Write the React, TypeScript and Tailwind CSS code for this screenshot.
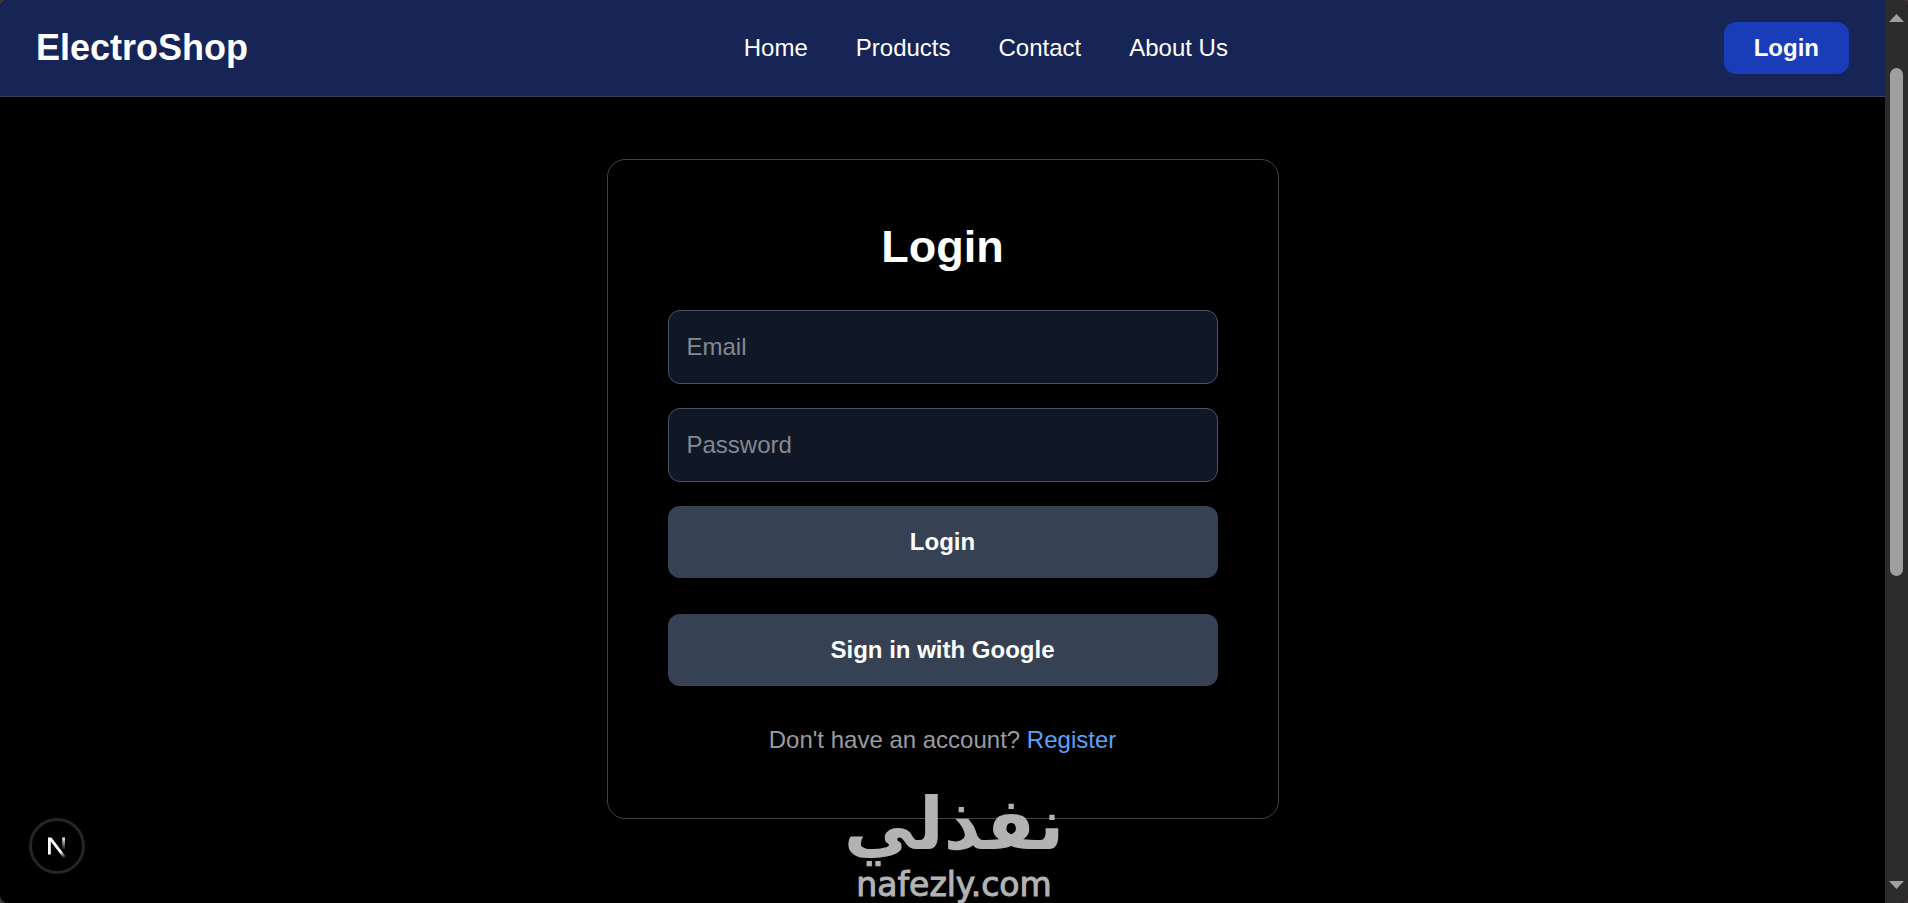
const navLinks = ["Home", "Products", "Contact", "About Us"];

function Header() {
  return (
    <header className="flex h-[97px] items-center justify-between border-b border-[#3c3f5c] bg-[#162456] px-9">
      <a href="#" className="text-4xl leading-[48px] font-bold">
        ElectroShop
      </a>
      <nav className="flex gap-12">
        {navLinks.map((label) => (
          <a key={label} href="#">
            {label}
          </a>
        ))}
      </nav>
      <button type="button" className="h-[52px] rounded-xl bg-[#193cb8] px-[30px] font-bold">
        Login
      </button>
    </header>
  );
}

function Field({ id, label, type }: { id: string; label: string; type: string }) {
  return (
    <input
      id={id}
      type={type}
      placeholder={label}
      aria-label={label}
      className="w-full rounded-xl border border-[#4a5565] bg-[#101828] px-[18px] py-[18px] leading-9 placeholder:text-[#85888f]"
    />
  );
}

function LoginCard() {
  return (
    <section className="w-full max-w-[672px] rounded-[18px] border border-[#444444] p-[60px]">
      <h1 className="mb-9 text-center text-[45px] leading-[54px] font-bold">Login</h1>
      <form className="flex flex-col gap-6">
        <Field id="email" label="Email" type="email" />
        <Field id="password" label="Password" type="password" />
        <button type="button" className="w-full rounded-xl bg-[#364153] py-[18px] font-bold">
          Login
        </button>
      </form>
      <button type="button" className="mt-9 w-full rounded-xl bg-[#364153] py-[18px] font-bold">
        Sign in with Google
      </button>
      <p className="mt-9 text-center text-[#9a9c9f]">
        Don't have an account?{" "}
        <a href="#" className="text-[#5ba3fa]">
          Register
        </a>
      </p>
    </section>
  );
}

function DevBadge() {
  return (
    <button
      type="button"
      aria-label="Developer tools"
      className="absolute bottom-[29px] left-[29px] flex size-14 items-center justify-center rounded-full border-[3px] border-[#252525] bg-black"
    >
      <svg width="20" height="24" viewBox="0 0 20 24" fill="none" aria-hidden="true">
        <defs>
          <linearGradient id="diagonal" x1="9" y1="11" x2="18" y2="24" gradientUnits="userSpaceOnUse">
            <stop stopColor="#fff" />
            <stop offset="0.5" stopColor="#fff" />
            <stop offset="1" stopColor="#fff" stopOpacity="0" />
          </linearGradient>
          <linearGradient id="stem" x1="16" y1="3" x2="16" y2="16" gradientUnits="userSpaceOnUse">
            <stop stopColor="#fff" />
            <stop offset="1" stopColor="#fff" stopOpacity="0" />
          </linearGradient>
        </defs>
        <path d="M1 3.5h3.4L19 22.8l-2.2 1.7L3.8 7.4V20.5H1z" fill="url(#diagonal)" />
        <path d="M15.2 3.5H18v12.5h-2.8z" fill="url(#stem)" />
      </svg>
    </button>
  );
}

function Watermark() {
  return (
    <div className="pointer-events-none absolute bottom-0 left-1/2 flex -translate-x-1/2 flex-col items-center font-['DejaVu_Sans',sans-serif] text-[#b3b3b3]">
      <span lang="ar" dir="rtl" className="text-[72px] leading-[86px] font-bold">
        نفذلي
      </span>
      <span className="text-[33px] leading-9 [-webkit-text-stroke:1px_#b3b3b3]">nafezly.com</span>
    </div>
  );
}

function ScrollRail() {
  return (
    <div aria-hidden="true" className="flex w-[23px] flex-col items-center bg-[#2c2c2c] py-[14px]">
      <svg width="15" height="8" viewBox="0 0 15 8">
        <path d="M7.5 0 15 8H0z" fill="#a0a0a0" />
      </svg>
      <div className="mt-[46px] w-[13px] grow-[508] rounded-full bg-[#9f9f9f]" />
      <div className="grow-[305]" />
      <svg width="15" height="8" viewBox="0 0 15 8">
        <path d="M0 0h15L7.5 8z" fill="#a0a0a0" />
      </svg>
    </div>
  );
}

export default function App() {
  return (
    <div className="bg-[#3b3536]">
      <div className="relative flex min-h-screen overflow-hidden rounded-lg bg-black font-['Liberation_Sans',Arial,sans-serif] text-2xl leading-9 text-white">
        <div className="flex min-w-0 flex-1 flex-col">
          <Header />
          <main className="flex flex-1 items-start justify-center pt-[62px] pb-12">
            <LoginCard />
          </main>
        </div>
        <ScrollRail />
        <DevBadge />
        <Watermark />
      </div>
    </div>
  );
}
